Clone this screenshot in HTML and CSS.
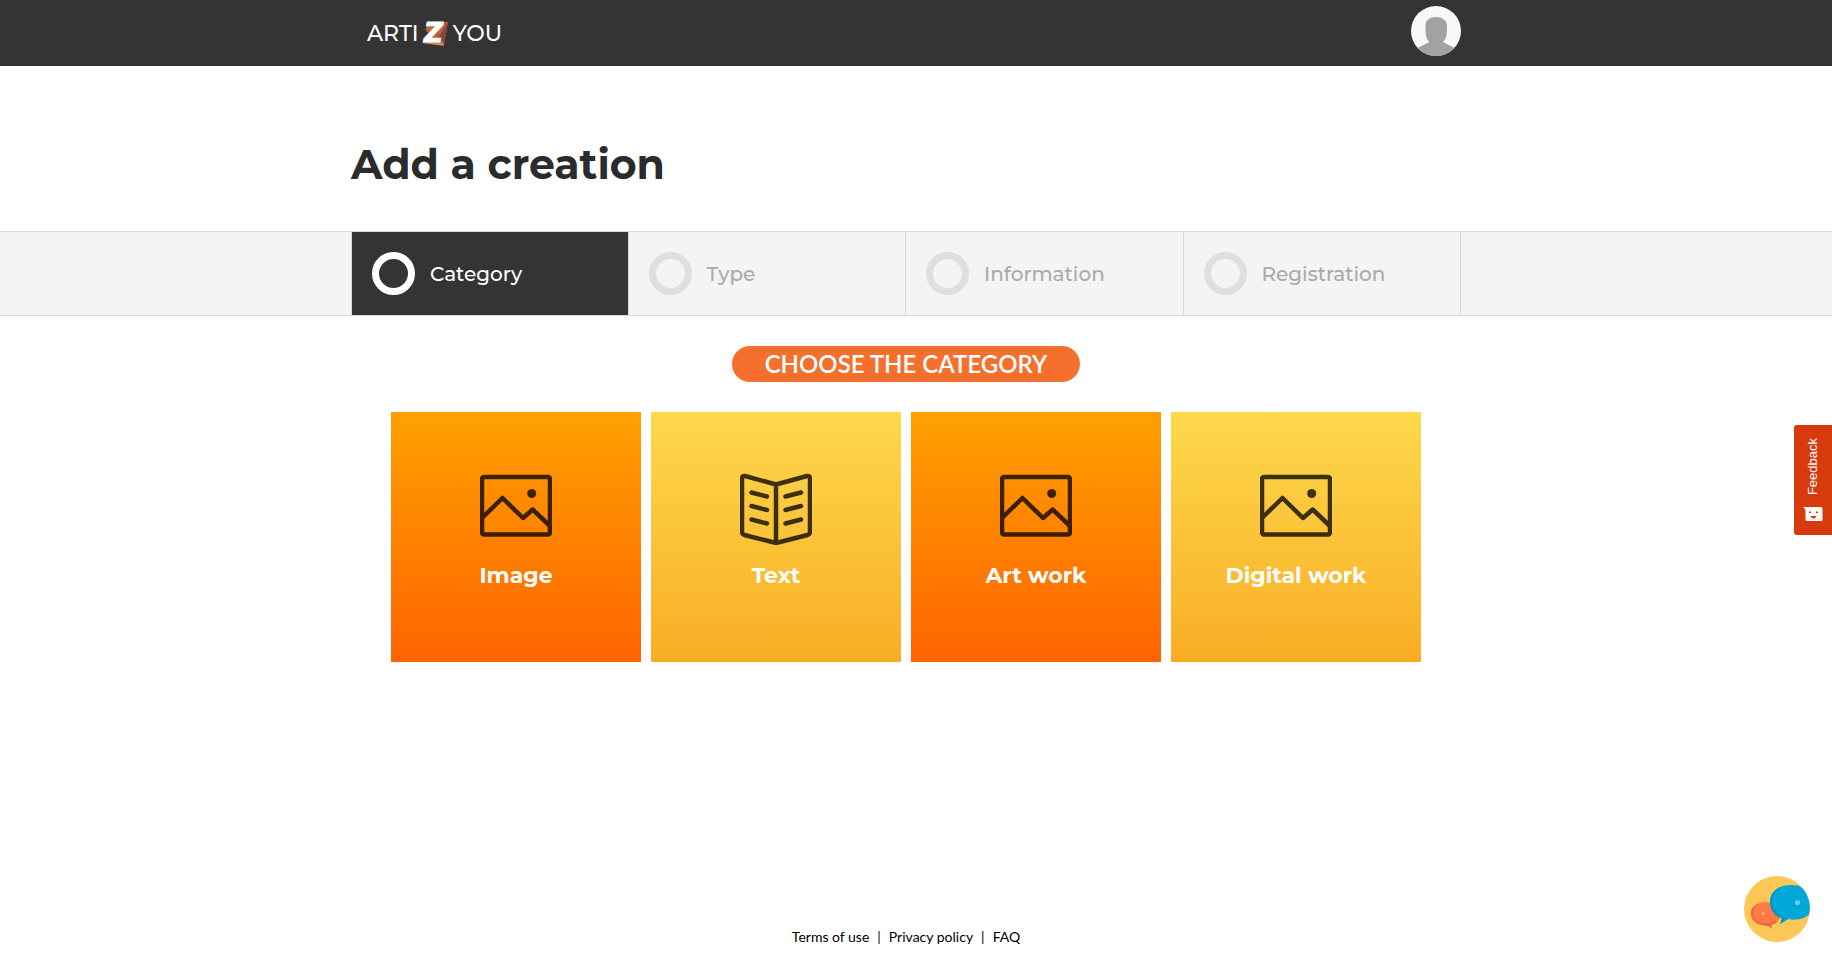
FILE: index.html
```html
<!DOCTYPE html>
<html lang="en">
<head>
<meta charset="utf-8">
<meta name="viewport" content="width=device-width, initial-scale=1">
<title>Add a creation - ArtiZyou</title>
<link rel="stylesheet" href="styles.css">
</head>
<body>
<svg class="sprite" aria-hidden="true">
  <symbol id="picture" viewBox="0 0 72 72">
    <rect x="2" y="4" width="68" height="57.500" rx="2"/>
    <path d="M3 44 22.500 25 43 45 52.700 36.500 70 53"/>
    <circle class="dot" cx="51.700" cy="20.500" r="4.500"/>
  </symbol>
  <symbol id="book" viewBox="0 0 72 72">
    <path d="M36 11.500 5 3Q2 2.500 2 5.500V59Q2 61 4.500 62L36 70 67.500 62Q70 61 70 59V5.500Q70 2.500 67 3ZM36 11.500V70"/>
    <path d="M11.500 19.500 27 23.500M11.500 33 27 37M11.500 46.500 27 50.500M61 19.500 45.500 23.500M61 33 45.500 37M61 46.500 45.500 50.500"/>
  </symbol>
</svg>

<header class="topbar">
  <div class="container topbar-row">
    <a class="logo" href="#" aria-label="ArtiZyou home">
      <span>ARTI</span>
      <svg class="logo-mark" viewBox="0 0 28 26" aria-hidden="true">
        <path fill="#b9603f" d="M5.300 1H26L22 24.700 0.300 22 7.500 13.500 3.500 9Z"/>
        <path fill="#8b4444" d="M24.500 3 26 1.500 22 24 20.500 20.500 16 17Z"/>
        <path fill="#d98b60" d="M0.300 22 20.500 21.500 22 24.700Z"/>
        <text class="logo-z" x="2" y="21">Z</text>
      </svg>
      <span>YOU</span>
    </a>
    <button class="avatar" type="button" aria-label="My account">
      <svg viewBox="0 0 50 50" aria-hidden="true">
        <circle cx="25" cy="25" r="25" fill="#f8f8f8"/>
        <path fill="#a2a2a2" d="M14.500 20C14.500 14 19 11 25 11S36 14 36 20V25C36 30 34 34 32 36L43.500 42A25 25 0 0 1 6.500 42L18.500 36C16 34 14.500 30 14.500 25Z"/>
      </svg>
    </button>
  </div>
</header>

<main class="main">
  <div class="container"><h1 class="title">Add a creation</h1></div>

  <nav class="steps-band" aria-label="Progress">
    <ol class="container steps">
      <li class="step step-active" aria-current="step"><span class="ring"></span>Category</li>
      <li class="step"><span class="ring"></span>Type</li>
      <li class="step"><span class="ring"></span>Information</li>
      <li class="step"><span class="ring"></span>Registration</li>
    </ol>
  </nav>

  <section class="container chooser">
    <h2 class="pill">CHOOSE THE CATEGORY</h2>
    <div class="cards">
      <a class="card card-orange" href="#"><svg class="card-icon"><use href="#picture"/></svg>Image</a>
      <a class="card card-yellow" href="#"><svg class="card-icon"><use href="#book"/></svg>Text</a>
      <a class="card card-orange" href="#"><svg class="card-icon"><use href="#picture"/></svg>Art work</a>
      <a class="card card-yellow" href="#"><svg class="card-icon"><use href="#picture"/></svg>Digital work</a>
    </div>
  </section>
</main>

<footer class="footer">
  <a href="#">Terms of use</a><span>|</span><a href="#">Privacy policy</a><span>|</span><a href="#">FAQ</a>
</footer>

<button class="feedback" type="button">
  <span class="feedback-label">Feedback</span>
  <svg class="feedback-icon" viewBox="0 0 20 15" aria-hidden="true">
    <path fill="#fff" d="M0 0H18Q19.500 0 19.500 1.500V12.500Q19.500 14 18 14H4Q2.500 14 2.500 12.500V4Q2.500 2 0 0Z"/>
    <path fill="#d63a0d" d="M6 4.500H8V6H6ZM13 4.500H15V6H13ZM7.500 9H13.500Q12.500 11.500 10.500 11.500T7.500 9Z"/>
  </svg>
</button>

<button class="chat" type="button" aria-label="Open chat">
  <svg viewBox="0 0 66 66" aria-hidden="true">
    <circle cx="33" cy="33" r="33" fill="#fec857"/>
    <path fill="#ff7a45" d="M21 26C12 26 7 31 7 38S13 49 21 49.500Q23 50 25 50L28 53 27 49C34 47 37 43 36 37S30 26 21 26Z"/>
    <path fill="#e9683a" d="M14 27.500C9 30 7 33 7 38S13 49 21 49.500L25 50 28 53 27 49Q30 48 33 46L32 44C24 50 9 48 9 38Q9 32 14 27.500ZM26 27C27 35 30 40 36 42V35Z"/>
    <circle cx="19.500" cy="37.500" r="1.800" fill="#ffa17d"/>
    <path fill="#00a8d8" d="M47 9C34 9 26 16 26 26 26 34 31 40 38 42L36 48 44 43C54 45 62 42 65 38Q67 30 64.500 23 61 12 54 9.500Z"/>
    <path fill="#0098c6" d="M38 10.500C30 13 26 19 26 26 26 34 31 40 38 42L36 48 44 43 40 41.500C26 36 24 20 38 10.500Z"/>
    <circle cx="53.500" cy="26.500" r="2.600" fill="#5ed0e4"/>
  </svg>
</button>
</body>
</html>
```

FILE: styles.css
```css
*,
*::before,
*::after {
  box-sizing: border-box;
}

:root {
  --heading: Montserrat, Inter, sans-serif;
  --dark: #343434;
  --line: #d9d9d9;
}

body {
  display: flex;
  flex-direction: column;
  min-height: 100vh;
  margin: 0;
  background: #fff;
  color: #222;
  font: 14px/20px Lato, sans-serif;
}

a {
  color: inherit;
  text-decoration: none;
}

button {
  padding: 0;
  border: 0;
  background: none;
  cursor: pointer;
}

svg {
  display: block;
}

.sprite {
  position: absolute;
  width: 0;
  height: 0;
}

.container {
  width: 100%;
  max-width: 1110px;
  margin: 0 auto;
}

.topbar {
  padding-right: 20px;
  background: var(--dark);
}

.topbar-row {
  display: flex;
  align-items: center;
  justify-content: space-between;
  height: 66px;
  padding-bottom: 4px;
}

.logo {
  display: flex;
  align-items: center;
  gap: 3px;
  padding: 6px 0 0 16px;
  color: #fff;
  font: 500 22px/28px var(--heading);
}

.logo-mark {
  width: 28px;
  height: 26px;
  overflow: visible;
}

.logo-z {
  fill: #fff;
  stroke: #fff;
  stroke-width: 1px;
  font: italic bold 26px "DejaVu Sans", sans-serif;
}

.avatar svg {
  width: 50px;
  height: 50px;
}

.main {
  flex: 1;
}

.main > .container,
.steps-band {
  padding-right: 20px;
}

.main > .container {
  max-width: 1130px;
}

.title {
  margin: 0;
  padding: 72px 0 41px;
  color: #292b2c;
  font: 700 41px/52px var(--heading);
}

.steps-band {
  border: solid var(--line);
  border-width: 1px 0;
  background: #f4f4f4;
}

.steps {
  display: grid;
  grid-template-columns: repeat(4, 1fr);
  padding: 0;
  list-style: none;
}

.step {
  display: flex;
  align-items: center;
  gap: 15px;
  height: 83px;
  padding-left: 20px;
  border-right: 1px solid var(--line);
  color: #aaa;
  font: 500 20px/24px var(--heading);
}

.step:first-child {
  border-left: 1px solid var(--line);
}

.step-active {
  background: var(--dark);
  background-clip: padding-box;
  color: #fff;
}

.ring {
  width: 43px;
  height: 43px;
  border: 7px solid #dfdfdf;
  border-radius: 50%;
}

.step-active .ring {
  border-color: #fff;
}

.chooser {
  display: flex;
  flex-direction: column;
  align-items: center;
  gap: 30px;
  padding-top: 30px;
}

.pill {
  margin: 0;
  padding: 0 33px;
  border-radius: 18px;
  background: #f6702d;
  color: #fff;
  font: 600 24px/36px Lato, sans-serif;
}

.cards {
  display: flex;
  flex-wrap: wrap;
  justify-content: center;
  gap: 10px;
}

.card {
  display: flex;
  flex-direction: column;
  align-items: center;
  gap: 17px;
  width: 250px;
  height: 250px;
  padding-top: 61px;
  color: #fff;
  font: 700 22px/28px var(--heading);
}

.card-orange {
  background: linear-gradient(#ffa000, #ff6400);
}

.card-yellow {
  background: linear-gradient(#fdd94c, #f9ad25);
}

.card-icon {
  width: 72px;
  height: 72px;
  fill: none;
  stroke: #000;
  stroke-width: 4.5;
  stroke-linecap: round;
  stroke-linejoin: round;
  opacity: 0.76;
}

.dot {
  fill: #000;
  stroke: none;
}

.footer {
  display: flex;
  justify-content: center;
  gap: 8px;
  padding: 0 20px 17px 0;
  color: #000;
}

.feedback {
  position: fixed;
  top: 425px;
  right: 0;
  display: flex;
  flex-direction: column;
  align-items: center;
  justify-content: space-between;
  width: 38px;
  height: 110px;
  padding: 13px 0;
  border-radius: 3px 0 0 3px;
  background: #d63a0d;
  color: #fff;
  font: 13px/16px "Liberation Sans", Arial, sans-serif;
}

.feedback-label {
  writing-mode: vertical-rl;
  transform: rotate(180deg);
}

.feedback-icon {
  width: 20px;
  height: 15px;
}

.chat {
  position: fixed;
  right: 22px;
  bottom: 22px;
}

.chat svg {
  width: 66px;
  height: 66px;
}
```
